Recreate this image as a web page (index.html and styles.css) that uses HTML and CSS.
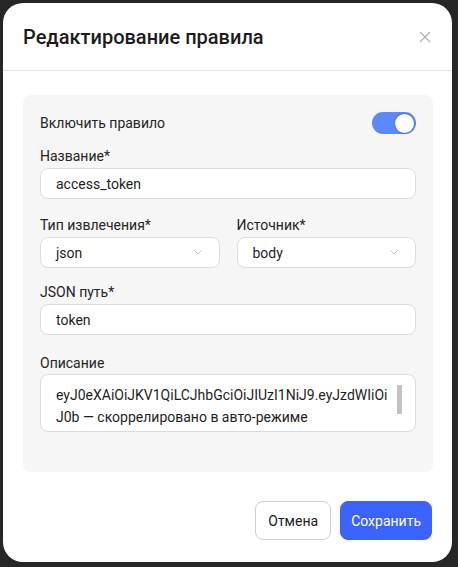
FILE: index.html
```html
<!DOCTYPE html>
<html lang="ru">
<head>
    <meta charset="UTF-8">
    <meta name="viewport" content="width=device-width, initial-scale=1.0">
    <title>Редактирование правила</title>
    <link rel="stylesheet" href="styles.css">
</head>
<body>

    <div class="modal">
        <div class="modal-header">
            <h2>Редактирование правила</h2>
            <button class="close-btn" type="button" aria-label="Закрыть">
                <svg width="12" height="12" viewBox="0 0 12 12"><path d="M1 1L11 11M11 1L1 11" stroke="#b4b4b4" stroke-width="1.3" fill="none"/></svg>
            </button>
        </div>

        <div class="modal-body">
            <div class="panel">
                <div class="toggle-row">
                    <span>Включить правило</span>
                    <span class="toggle"><span class="knob"></span></span>
                </div>

                <div class="field">
                    <label>Название*</label>
                    <div class="input">access_token</div>
                </div>

                <div class="field-row">
                    <div class="field">
                        <label>Тип извлечения*</label>
                        <div class="input select">
                            <span>json</span>
                            <svg width="8" height="5" viewBox="0 0 8 5"><path d="M0.5 0.5L4 4L7.5 0.5" stroke="#c2c2c2" stroke-width="1" fill="none"/></svg>
                        </div>
                    </div>
                    <div class="field">
                        <label>Источник*</label>
                        <div class="input select">
                            <span>body</span>
                            <svg width="8" height="5" viewBox="0 0 8 5"><path d="M0.5 0.5L4 4L7.5 0.5" stroke="#c2c2c2" stroke-width="1" fill="none"/></svg>
                        </div>
                    </div>
                </div>

                <div class="field field-path">
                    <label>JSON путь*</label>
                    <div class="input">token</div>
                </div>

                <div class="field field-desc">
                    <label>Описание</label>
                    <div class="textarea">
                        <div class="textarea-text">eyJ0eXAiOiJKV1QiLCJhbGciOiJIUzI1NiJ9.eyJzdWIiOi<br>J0b — скоррелировано в авто-режиме</div>
                        <span class="scroll-thumb"></span>
                    </div>
                </div>
            </div>
        </div>

        <div class="modal-footer">
            <button class="btn" type="button">Отмена</button>
            <button class="btn btn-primary" type="button">Сохранить</button>
        </div>
    </div>

</body>
</html>
```

FILE: styles.css
```css
* {
    box-sizing: border-box;
}
body {
    margin: 0;
    background-color: #262626;
    font-family: Roboto, 'Noto Sans', 'Liberation Sans', sans-serif;
    color: #222;
    font-size: 14px;
}
.modal {
    margin: 3px 0 0 3px;
    width: 449px;
    height: 559px;
    background-color: #fff;
    border-radius: 20px;
    display: flex;
    flex-direction: column;
    overflow: hidden;
}
.modal-header {
    height: 68px;
    flex-shrink: 0;
    display: flex;
    align-items: center;
    justify-content: space-between;
    padding: 0 21px 0 20px;
    border-bottom: 1px solid #e2e2e2;
}
.modal-header h2 {
    margin: 0;
    font-size: 20px;
    font-weight: 500;
    color: #1d1d1d;
}
.close-btn {
    border: none;
    background: none;
    padding: 0;
    display: flex;
    cursor: pointer;
}
.modal-body {
    padding: 24px 19px 0 20px;
}
.panel {
    background-color: #f6f6f6;
    border-radius: 8px;
    padding: 17px 17px 40px 17px;
    height: 377px;
}
.toggle-row {
    display: flex;
    align-items: center;
    justify-content: space-between;
    height: 22px;
    margin-bottom: 12px;
    color: #242424;
}
.toggle {
    width: 44px;
    height: 22px;
    border-radius: 11px;
    background-color: #5b87ff;
    display: flex;
    align-items: center;
    justify-content: flex-end;
    padding: 2px;
}
.knob {
    width: 19px;
    height: 19px;
    border-radius: 50%;
    background-color: #fff;
    box-shadow: 0 0 0 1px #4a78ee;
}
.field {
    display: flex;
    flex-direction: column;
    margin-bottom: 16px;
}
.field label {
    line-height: 20px;
    margin-bottom: 2px;
    color: #242424;
}
.field-row {
    display: flex;
    gap: 17px;
}
.field-row .field {
    flex: 1;
    margin-bottom: 14px;
}
.field-path {
    margin-bottom: 18px;
}
.field-desc label {
    margin-bottom: 1px;
}
.input {
    height: 31px;
    background-color: #fff;
    border: 1px solid #dcdcdc;
    border-radius: 8px;
    padding: 0 15px;
    display: flex;
    align-items: center;
    color: #1f1f1f;
}
.select {
    justify-content: space-between;
    padding-right: 17px;
}
.textarea {
    height: 58px;
    background-color: #fff;
    border: 1px solid #dcdcdc;
    border-radius: 8px;
    padding: 9px 13px 0 15px;
    display: flex;
    justify-content: space-between;
    color: #1f1f1f;
}
.textarea-text {
    line-height: 22px;
    white-space: nowrap;
}
.scroll-thumb {
    width: 5px;
    height: 29px;
    margin-top: 1px;
    background-color: #c3c3c3;
}
.modal-footer {
    display: flex;
    justify-content: flex-end;
    gap: 9px;
    padding: 29px 20px 0 0;
}
.btn {
    height: 39px;
    padding: 0 12px;
    border: 1px solid #cfcfcf;
    border-radius: 8px;
    background-color: #fff;
    font-family: inherit;
    font-size: 14px;
    color: #222;
    cursor: pointer;
}
.btn-primary {
    background-color: #3b63ff;
    border-color: #3b63ff;
    color: #fff;
    padding: 0 10px;
}
```
